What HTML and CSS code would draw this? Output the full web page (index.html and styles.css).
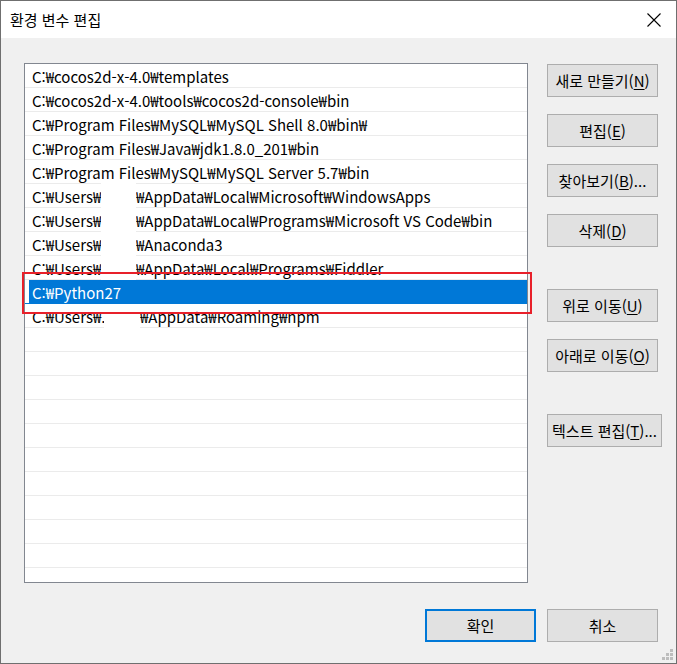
FILE: index.html
```html
<!DOCTYPE html>
<html lang="ko">
<head>
<meta charset="utf-8">
<title>환경 변수 편집</title>
<link rel="stylesheet" href="styles.css">
</head>
<body>
<div class="window">
  <div class="titlebar">
    <span class="title">환경 변수 편집</span>
    <svg class="close" width="14" height="14" viewBox="0 0 14 14"><path d="M0.5 0.5 L13.5 13.5 M13.5 0.5 L0.5 13.5" stroke="#000" stroke-width="1.1" fill="none"/></svg>
  </div>
  <div class="content">
    <div class="main">
      <div class="list">
        <div class="row"><span class="cell">C:₩cocos2d-x-4.0₩templates</span></div>
        <div class="row"><span class="cell">C:₩cocos2d-x-4.0₩tools₩cocos2d-console₩bin</span></div>
        <div class="row"><span class="cell">C:₩Program Files₩MySQL₩MySQL Shell 8.0₩bin₩</span></div>
        <div class="row"><span class="cell">C:₩Program Files₩Java₩jdk1.8.0_201₩bin</span></div>
        <div class="row"><span class="cell">C:₩Program Files₩MySQL₩MySQL Server 5.7₩bin</span></div>
        <div class="row"><span class="cell"><span class="pre">C:₩Users₩</span><span class="mask"></span><span>₩AppData₩Local₩Microsoft₩WindowsApps</span></span></div>
        <div class="row"><span class="cell"><span class="pre">C:₩Users₩</span><span class="mask"></span><span>₩AppData₩Local₩Programs₩Microsoft VS Code₩bin</span></span></div>
        <div class="row"><span class="cell"><span class="pre">C:₩Users₩</span><span class="mask"></span><span>₩Anaconda3</span></span></div>
        <div class="row"><span class="cell"><span class="pre">C:₩Users₩</span><span class="mask"></span><span>₩AppData₩Local₩Programs₩Fiddler</span></span></div>
        <div class="row selected"><span class="cell">C:₩Python27</span></div>
        <div class="row"><span class="cell"><span class="pre pre-wide">C:₩Users₩.</span><span class="mask mask-wide"></span><span>₩AppData₩Roaming₩npm</span></span></div>
        <div class="row"><span class="cell"></span></div>
        <div class="row"><span class="cell"></span></div>
        <div class="row"><span class="cell"></span></div>
        <div class="row"><span class="cell"></span></div>
        <div class="row"><span class="cell"></span></div>
        <div class="row"><span class="cell"></span></div>
        <div class="row"><span class="cell"></span></div>
        <div class="row"><span class="cell"></span></div>
        <div class="row"><span class="cell"></span></div>
        <div class="row"><span class="cell"></span></div>
      </div>
      <div class="side">
        <button class="btn">새로 만들기(<u>N</u>)</button>
        <button class="btn">편집(<u>E</u>)</button>
        <button class="btn">찾아보기(<u>B</u>)...</button>
        <button class="btn">삭제(<u>D</u>)</button>
        <button class="btn sep">위로 이동(<u>U</u>)</button>
        <button class="btn">아래로 이동(<u>O</u>)</button>
        <button class="btn sep wide">텍스트 편집(<u>T</u>)...</button>
      </div>
    </div>
    <div class="footer">
      <button class="btn default">확인</button>
      <button class="btn">취소</button>
    </div>
  </div>
  <svg class="grip" width="13" height="13" viewBox="0 0 13 13">
    <rect x="8" y="0" width="3" height="3" fill="#bdbdbd"/>
    <rect x="4" y="4" width="3" height="3" fill="#bdbdbd"/>
    <rect x="8" y="4" width="3" height="3" fill="#bdbdbd"/>
    <rect x="0" y="8" width="3" height="3" fill="#bdbdbd"/>
    <rect x="4" y="8" width="3" height="3" fill="#bdbdbd"/>
    <rect x="8" y="8" width="3" height="3" fill="#bdbdbd"/>
  </svg>
  <div class="highlight"></div>
</div>
</body>
</html>
```
FILE: styles.css
```css
* { box-sizing: border-box; }
html, body { margin: 0; padding: 0; background: #f0f0f0; }
body {
  font-family: "Noto Sans CJK KR", "Noto Sans", sans-serif;
  font-size: 15px;
  color: #000;
}
.window {
  position: relative;
  width: 677px;
  height: 664px;
  border: 1px solid #6f6f6f;
  background: #f0f0f0;
  display: flex;
  flex-direction: column;
}
.titlebar {
  height: 37px;
  background: #fff;
  display: flex;
  align-items: center;
  justify-content: space-between;
  padding: 0 15px 0 9px;
  flex: none;
}
.title { font-size: 15px; line-height: 1; margin-top: -1px; }
.close { display: block; margin-top: 1px; }
.content {
  flex: 1;
  display: flex;
  flex-direction: column;
  padding: 25px 18px 0 23px;
}
.main { display: flex; align-items: flex-start; }
.list {
  width: 504px;
  height: 520px;
  border: 1px solid #828790;
  background: #fff;
  overflow: hidden;
  flex: none;
}
.row {
  height: 24px;
  border-bottom: 1px solid #ebebeb;
  display: flex;
  padding-left: 4px;
}
.cell {
  flex: 1;
  display: flex;
  align-items: center;
  padding: 2px 0 0 3px;
  white-space: nowrap;
  font-size: 15px;
  line-height: 21px;
}
.row.selected { border-bottom-color: #0078d7; }
.row.selected .cell {
  background: #0078d7;
  color: #fff;
}
.pre { display: inline-block; width: 69px; overflow: visible; }
.pre-wide { width: 72px; }
.mask {
  align-self: stretch;
  width: 35px;
  flex: none;
  background: #fff;
  margin: -3px 0 -1px 0;
  position: relative;
}
.mask-wide { width: 36px; margin-top: -2px; }
.side {
  display: flex;
  flex-direction: column;
  align-items: flex-start;
  gap: 17px;
  margin-left: 19px;
  padding-top: 1px;
}
.btn {
  width: 111px;
  height: 33px;
  border: 1px solid #adadad;
  background: #e1e1e1;
  font-family: "Noto Sans CJK KR", "Noto Sans", sans-serif;
  font-size: 15px;
  color: #000;
  padding: 0;
  display: flex;
  align-items: center;
  justify-content: center;
  white-space: nowrap;
  line-height: 1;
}
.btn u { text-underline-offset: 2px; }
.btn.sep { margin-top: 25px; }
.btn.wide { width: 115px; }
.footer {
  display: flex;
  justify-content: flex-end;
  gap: 11px;
  margin-top: 26px;
}
.btn.default { border: 2px solid #0078d7; }
.grip { position: absolute; right: 1px; bottom: 1px; }
.highlight {
  position: absolute;
  left: 21px;
  top: 271px;
  width: 510px;
  height: 42px;
  border: 2px solid #e8202a;
  pointer-events: none;
}
```
